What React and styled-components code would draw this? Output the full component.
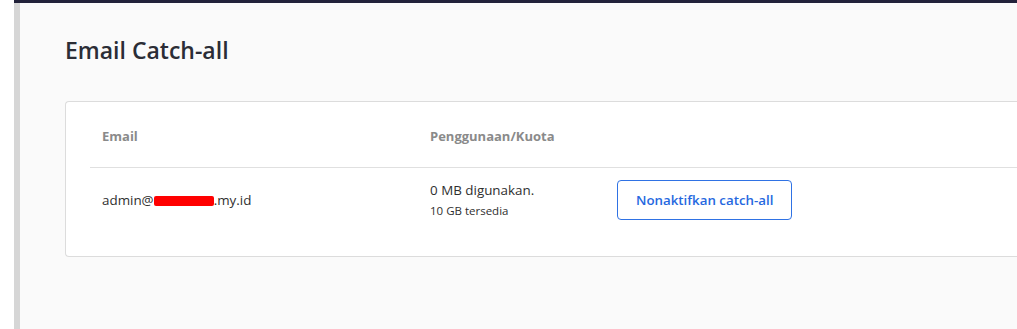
import React from "react";
import styled, { createGlobalStyle } from "styled-components";

const GlobalStyle = createGlobalStyle`
  html, body {
    margin: 0;
    padding: 0;
    background: #ffffff;
    font-family: "Open Sans", "Noto Sans", "Liberation Sans", sans-serif;
  }
`;

const Shell = styled.div`
  display: flex;
  height: 329px;
  overflow: hidden;
`;

const LeftGutter = styled.div`
  width: 14px;
  flex-shrink: 0;
  background: #ffffff;
`;

const Frame = styled.div`
  flex: 1;
  display: flex;
  flex-direction: column;
  min-width: 0;
`;

const TopBar = styled.div`
  height: 3px;
  background: #22223a;
`;

const Body = styled.div`
  flex: 1;
  display: flex;
`;

const SideEdge = styled.div`
  width: 6px;
  background: #d6d6d6;
`;

const Main = styled.main`
  flex: 1;
  background: #fafafa;
  padding: 28px 0 0 45px;
  min-width: 0;
`;

const Title = styled.h1`
  margin: 0 0 32px;
  font-size: 23px;
  font-weight: 600;
  color: #2b2d36;
  line-height: 38px;
`;

const Card = styled.div`
  background: #ffffff;
  border: 1px solid #dcdcdc;
  border-right: none;
  border-radius: 4px 0 0 4px;
  padding: 0 0 0 24px;
  height: 154px;
`;

const Table = styled.table`
  border-collapse: collapse;
  width: 100%;
`;

const HeadCell = styled.th`
  text-align: left;
  font-size: 13px;
  font-weight: 700;
  color: #8a8a8a;
  padding: 4px 12px 0;
  height: 65px;
  box-sizing: border-box;
  border-bottom: 1px solid #e0e0e0;
  width: ${(p) => p.$w || "auto"};
`;

const Cell = styled.td`
  font-size: 13.4px;
  color: #2f2f2f;
  padding: 12px 12px 0;
  vertical-align: top;
  height: 76px;
  box-sizing: border-box;
`;

const EmailText = styled.div`
  padding-top: 10px;
  line-height: 20px;
`;

const Redacted = styled.span`
  display: inline-block;
  width: 60px;
  height: 10px;
  background: #ff0000;
  vertical-align: -1px;
  border-radius: 2px;
`;

const Usage = styled.div`
  line-height: 20px;
`;

const Available = styled.div`
  font-size: 11.5px;
  line-height: 22px;
  color: #2f2f2f;
`;

const OutlineButton = styled.button`
  font-family: inherit;
  font-size: 13.3px;
  font-weight: 600;
  color: #2668e0;
  background: #ffffff;
  border: 1px solid #2f72e4;
  border-radius: 4px;
  height: 40px;
  padding: 0 18px;
  cursor: pointer;
`;

export default function App() {
  return (
    <>
      <GlobalStyle />
      <Shell>
        <LeftGutter />
        <Frame>
          <TopBar />
          <Body>
            <SideEdge />
            <Main>
              <Title>Email Catch-all</Title>
              <Card>
                <Table>
                  <thead>
                    <tr>
                      <HeadCell $w="328px">Email</HeadCell>
                      <HeadCell $w="187px">Penggunaan/Kuota</HeadCell>
                      <HeadCell />
                    </tr>
                  </thead>
                  <tbody>
                    <tr>
                      <Cell>
                        <EmailText>
                          admin@<Redacted />.my.id
                        </EmailText>
                      </Cell>
                      <Cell>
                        <Usage>0 MB digunakan.</Usage>
                        <Available>10 GB tersedia</Available>
                      </Cell>
                      <Cell>
                        <OutlineButton>Nonaktifkan catch-all</OutlineButton>
                      </Cell>
                    </tr>
                  </tbody>
                </Table>
              </Card>
            </Main>
          </Body>
        </Frame>
      </Shell>
    </>
  );
}
